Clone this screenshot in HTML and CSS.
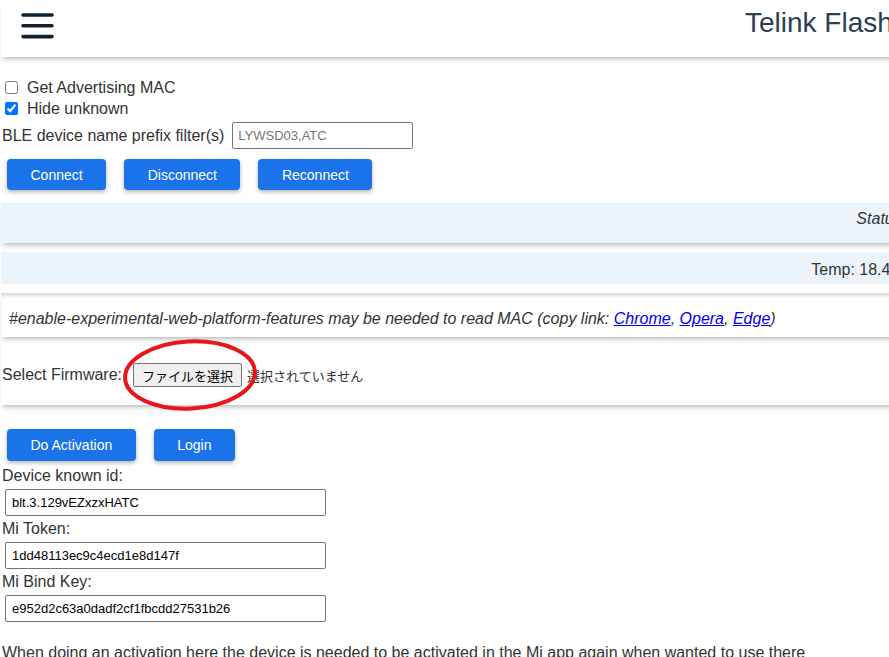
FILE: index.html
```html
<!DOCTYPE html>
<html lang="en">
<head>
    <meta charset="UTF-8">
    <meta name="viewport" content="width=device-width, initial-scale=1.0">
    <title>Telink Flasher</title>
    <link rel="stylesheet" href="styles.css">
</head>
<body>
<div class="page">
    <header class="topbar">
        <button class="menu-btn" aria-label="menu">
            <svg width="33" height="26" viewBox="0 0 33 26">
                <path d="M2 2H31M2 12.8H31M2 23.6H31" stroke="#10212f" stroke-width="3.6" stroke-linecap="round"/>
            </svg>
        </button>
        <h1 class="title">Telink Flasher for Mi Thermostat</h1>
    </header>

    <div class="options">
        <label class="check-row"><input type="checkbox"><span>Get Advertising MAC</span></label>
        <label class="check-row"><input type="checkbox" checked><span>Hide unknown</span></label>
        <div class="filter-row">
            <label for="namePrefix">BLE device name prefix filter(s)</label>
            <input type="text" id="namePrefix" placeholder="LYWSD03,ATC">
        </div>
    </div>

    <div class="btn-row connect-row">
        <button class="btn">Connect</button>
        <button class="btn">Disconnect</button>
        <button class="btn">Reconnect</button>
    </div>

    <div class="panel status-panel"><i>Status: Connected</i></div>
    <div class="panel temp-panel">Temp: 18.4°C, Hum: 48%</div>

    <div class="notice">
        <i>#enable-experimental-web-platform-features may be needed to read MAC (copy link: <a href="#">Chrome</a>, <a href="#">Opera</a>, <a href="#">Edge</a>)</i>
    </div>

    <div class="firmware">
        <span>Select Firmware:</span>
        <button class="file-btn">ファイルを選択</button>
        <span class="file-name">選択されていません</span>
        <svg class="mark" width="140" height="80" viewBox="0 0 140 80">
            <ellipse cx="70" cy="40" rx="65" ry="33.5" transform="rotate(-3 70 40)" fill="none" stroke="#e8151b" stroke-width="4"/>
        </svg>
    </div>

    <div class="btn-row activation-row">
        <button class="btn">Do Activation</button>
        <button class="btn">Login</button>
    </div>

    <div class="field">
        <label for="knownId">Device known id:</label>
        <input type="text" id="knownId" value="blt.3.129vEZxzxHATC">
    </div>
    <div class="field">
        <label for="miToken">Mi Token:</label>
        <input type="text" id="miToken" value="1dd48113ec9c4ecd1e8d147f">
    </div>
    <div class="field">
        <label for="bindKey">Mi Bind Key:</label>
        <input type="text" id="bindKey" value="e952d2c63a0dadf2cf1fbcdd27531b26">
    </div>

    <p class="hint">When doing an activation here the device is needed to be activated in the Mi app again when wanted to use there</p>
</div>
</body>
</html>
```

FILE: styles.css
```css
body {
    margin: 0;
    padding: 0 0 0 1px;
    font-family: "Liberation Sans", Arial, sans-serif;
    font-size: 16px;
    color: #333;
    background-color: #fff;
    overflow: hidden;
}
.page {
    width: 1000px;
}
.topbar {
    display: flex;
    align-items: flex-start;
    height: 57px;
    box-sizing: border-box;
    padding: 8px 0 0 20px;
    background-color: #fff;
    box-shadow: 0 4px 5px -2px rgba(0, 0, 0, 0.28);
}
.menu-btn {
    margin-top: 5px;
    padding: 0;
    border: none;
    background: none;
    line-height: 0;
}
.title {
    margin: 0 0 0 691px;
    font-size: 28px;
    font-weight: normal;
    line-height: 30px;
    color: #2c3e50;
    white-space: nowrap;
}
.options {
    margin-top: 20px;
}
.check-row {
    display: flex;
    align-items: center;
    height: 21px;
}
.check-row input {
    margin: 3px 3px 3px 4px;
}
.check-row span {
    margin-left: 6px;
}
.filter-row {
    display: flex;
    align-items: center;
    margin-top: 3px;
    padding-left: 1px;
}
.filter-row input {
    margin-left: 8px;
    width: 181px;
    height: 27px;
    box-sizing: border-box;
    padding: 0 5px;
    border: 1px solid #767676;
    border-radius: 2px;
    font-family: "Liberation Sans", Arial, sans-serif;
    font-size: 13px;
}
.filter-row input::placeholder {
    color: #757575;
}
.btn-row {
    display: flex;
    gap: 18px;
    padding-left: 6px;
}
.connect-row {
    margin-top: 10px;
}
.activation-row {
    margin-top: 24px;
}
.btn {
    height: 31px;
    padding: 0 23.5px;
    border: none;
    border-radius: 4px;
    background-color: #1a73e8;
    color: #fff;
    font-family: "Liberation Sans", Arial, sans-serif;
    font-size: 14px;
    box-shadow: 0 2px 4px rgba(0, 0, 0, 0.3);
}
.activation-row .btn {
    height: 32px;
}
.panel {
    background-color: #ecf4fb;
    text-align: right;
    line-height: 21px;
    padding-right: 13px;
}
.status-panel {
    margin-top: 13px;
    height: 40px;
    box-sizing: border-box;
    padding-top: 5px;
    box-shadow: 0 4px 5px -2px rgba(0, 0, 0, 0.28);
}
.temp-panel {
    margin-top: 9px;
    height: 32px;
    box-sizing: border-box;
    padding-top: 7px;
    padding-right: 9px;
}
.notice {
    margin-top: 9px;
    height: 44px;
    box-sizing: border-box;
    padding: 15px 0 0 8px;
    line-height: 21px;
    box-shadow: inset 0 5px 5px -3px rgba(0, 0, 0, 0.22), 0 4px 5px -2px rgba(0, 0, 0, 0.28);
}
.notice a {
    color: #0000ee;
}
.firmware {
    position: relative;
    display: flex;
    align-items: center;
    height: 68px;
    box-sizing: border-box;
    padding: 8px 0 0 1px;
    box-shadow: 0 4px 5px -2px rgba(0, 0, 0, 0.28);
}
.file-btn {
    margin-left: 11px;
    height: 24px;
    padding: 0 8px;
    border: 1px solid #767676;
    border-radius: 2px;
    background-color: #efefef;
    color: #000;
    font-family: "Noto Sans CJK JP", sans-serif;
    font-size: 13px;
}
.file-name {
    margin-left: 5px;
    font-family: "Noto Sans CJK JP", sans-serif;
    font-size: 13px;
}
.mark {
    position: absolute;
    left: 119px;
    top: -2px;
}
.field label {
    display: block;
    margin-top: 4px;
    padding-left: 1px;
    line-height: 21px;
}
.field + .field label {
    margin-top: 2px;
}
.field input {
    display: block;
    margin: 3px 0 0 4px;
    width: 321px;
    height: 27px;
    box-sizing: border-box;
    padding: 0 6px;
    border: 1px solid #767676;
    border-radius: 2px;
    font-family: "Liberation Sans", Arial, sans-serif;
    font-size: 13px;
    color: #000;
}
.hint {
    margin: 20px 0 0;
    padding-left: 1px;
    line-height: 21px;
    white-space: nowrap;
}
```
